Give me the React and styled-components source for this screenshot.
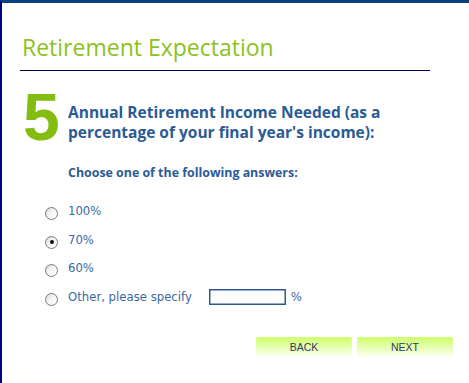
import React from 'react';
import styled, { createGlobalStyle } from 'styled-components';

const GlobalStyle = createGlobalStyle`
  html, body {
    margin: 0;
    padding: 0;
    background: #ffffff;
  }
`;

const Frame = styled.div`
  box-sizing: border-box;
  width: 469px;
  height: 383px;
  border-top: 3px solid #0b3f7e;
  border-left: 2px solid #000080;
  padding: 0 39px 0 18px;
  background: #ffffff;
`;

const Title = styled.h1`
  margin: 29px 0 0;
  padding: 0 0 8px 2px;
  font-family: "Open Sans", "Liberation Sans", sans-serif;
  font-weight: 400;
  font-size: 23px;
  line-height: 30px;
  color: #8cc21e;
  border-bottom: 1px solid #000050;
`;

const Step = styled.div`
  display: flex;
  align-items: flex-start;
  margin-top: 13px;
  padding-left: 3px;
`;

const StepNumber = styled.div`
  font-family: "Liberation Sans", sans-serif;
  font-weight: 700;
  font-size: 66px;
  line-height: 66px;
  color: #84bd12;
  width: 45px;
  letter-spacing: -2px;
`;

const Question = styled.h2`
  margin: 18px 0 0;
  font-family: "Open Sans", "Liberation Sans", sans-serif;
  font-weight: 700;
  font-size: 15.5px;
  line-height: 20px;
  color: #2b5b95;
`;

const Prompt = styled.p`
  margin: 15px 0 0 48px;
  font-family: "Open Sans", "Liberation Sans", sans-serif;
  font-weight: 700;
  font-size: 12.4px;
  line-height: 16px;
  color: #2b5b95;
`;

const Options = styled.div`
  display: flex;
  flex-direction: column;
  gap: 12.5px;
  margin-top: 22px;
  padding-left: 25px;
`;

const Option = styled.label`
  display: flex;
  align-items: center;
  height: 16px;
  font-family: "DejaVu Sans", Verdana, sans-serif;
  font-size: 11.7px;
  color: #3a69a2;
`;

const Radio = styled.span`
  box-sizing: border-box;
  position: relative;
  width: 13px;
  height: 13px;
  margin: 5px 10px 0 0;
  border: 1px solid #7a7a7a;
  border-radius: 50%;
  background: linear-gradient(135deg, #d8d8d8 0%, #f4f4f4 45%, #ffffff 100%);
  flex: none;

  &::after {
    content: "";
    display: ${p => (p.$checked ? 'block' : 'none')};
    position: absolute;
    left: 3.5px;
    top: 3.5px;
    width: 4px;
    height: 4px;
    border-radius: 50%;
    background: #111111;
  }
`;

const SpecifyBox = styled.span`
  box-sizing: border-box;
  display: inline-block;
  width: 77px;
  height: 16px;
  margin: 0 5px 0 17px;
  border: 1px solid #2b5b95;
  box-shadow: inset 0 0 0 0.5px #2b5b95;
`;

const Buttons = styled.div`
  display: flex;
  justify-content: flex-end;
  gap: 5px;
  margin-top: 32px;
  margin-right: -23px;
`;

const Button = styled.button`
  width: 96px;
  height: 21px;
  border: none;
  border-radius: 2px;
  padding: 0;
  background: linear-gradient(to bottom, #cdff6a 0%, #e8ffb8 55%, #ffffff 100%);
  font-family: "Liberation Sans", Arial, sans-serif;
  font-size: 10.5px;
  color: #34395e;
  cursor: pointer;
`;

const choices = [
  { label: '100%' },
  { label: '70%', checked: true },
  { label: '60%' },
];

export default function App() {
  return (
    <>
      <GlobalStyle />
      <Frame>
        <Title>Retirement Expectation</Title>
        <Step>
          <StepNumber>5</StepNumber>
          <Question>
            Annual Retirement Income Needed (as a
            <br />
            percentage of your final year's income):
          </Question>
        </Step>
        <Prompt>Choose one of the following answers:</Prompt>
        <Options>
          {choices.map(c => (
            <Option key={c.label}>
              <Radio $checked={c.checked} />
              {c.label}
            </Option>
          ))}
          <Option>
            <Radio />
            Other, please specify
            <SpecifyBox />
            %
          </Option>
        </Options>
        <Buttons>
          <Button>BACK</Button>
          <Button>NEXT</Button>
        </Buttons>
      </Frame>
    </>
  );
}
